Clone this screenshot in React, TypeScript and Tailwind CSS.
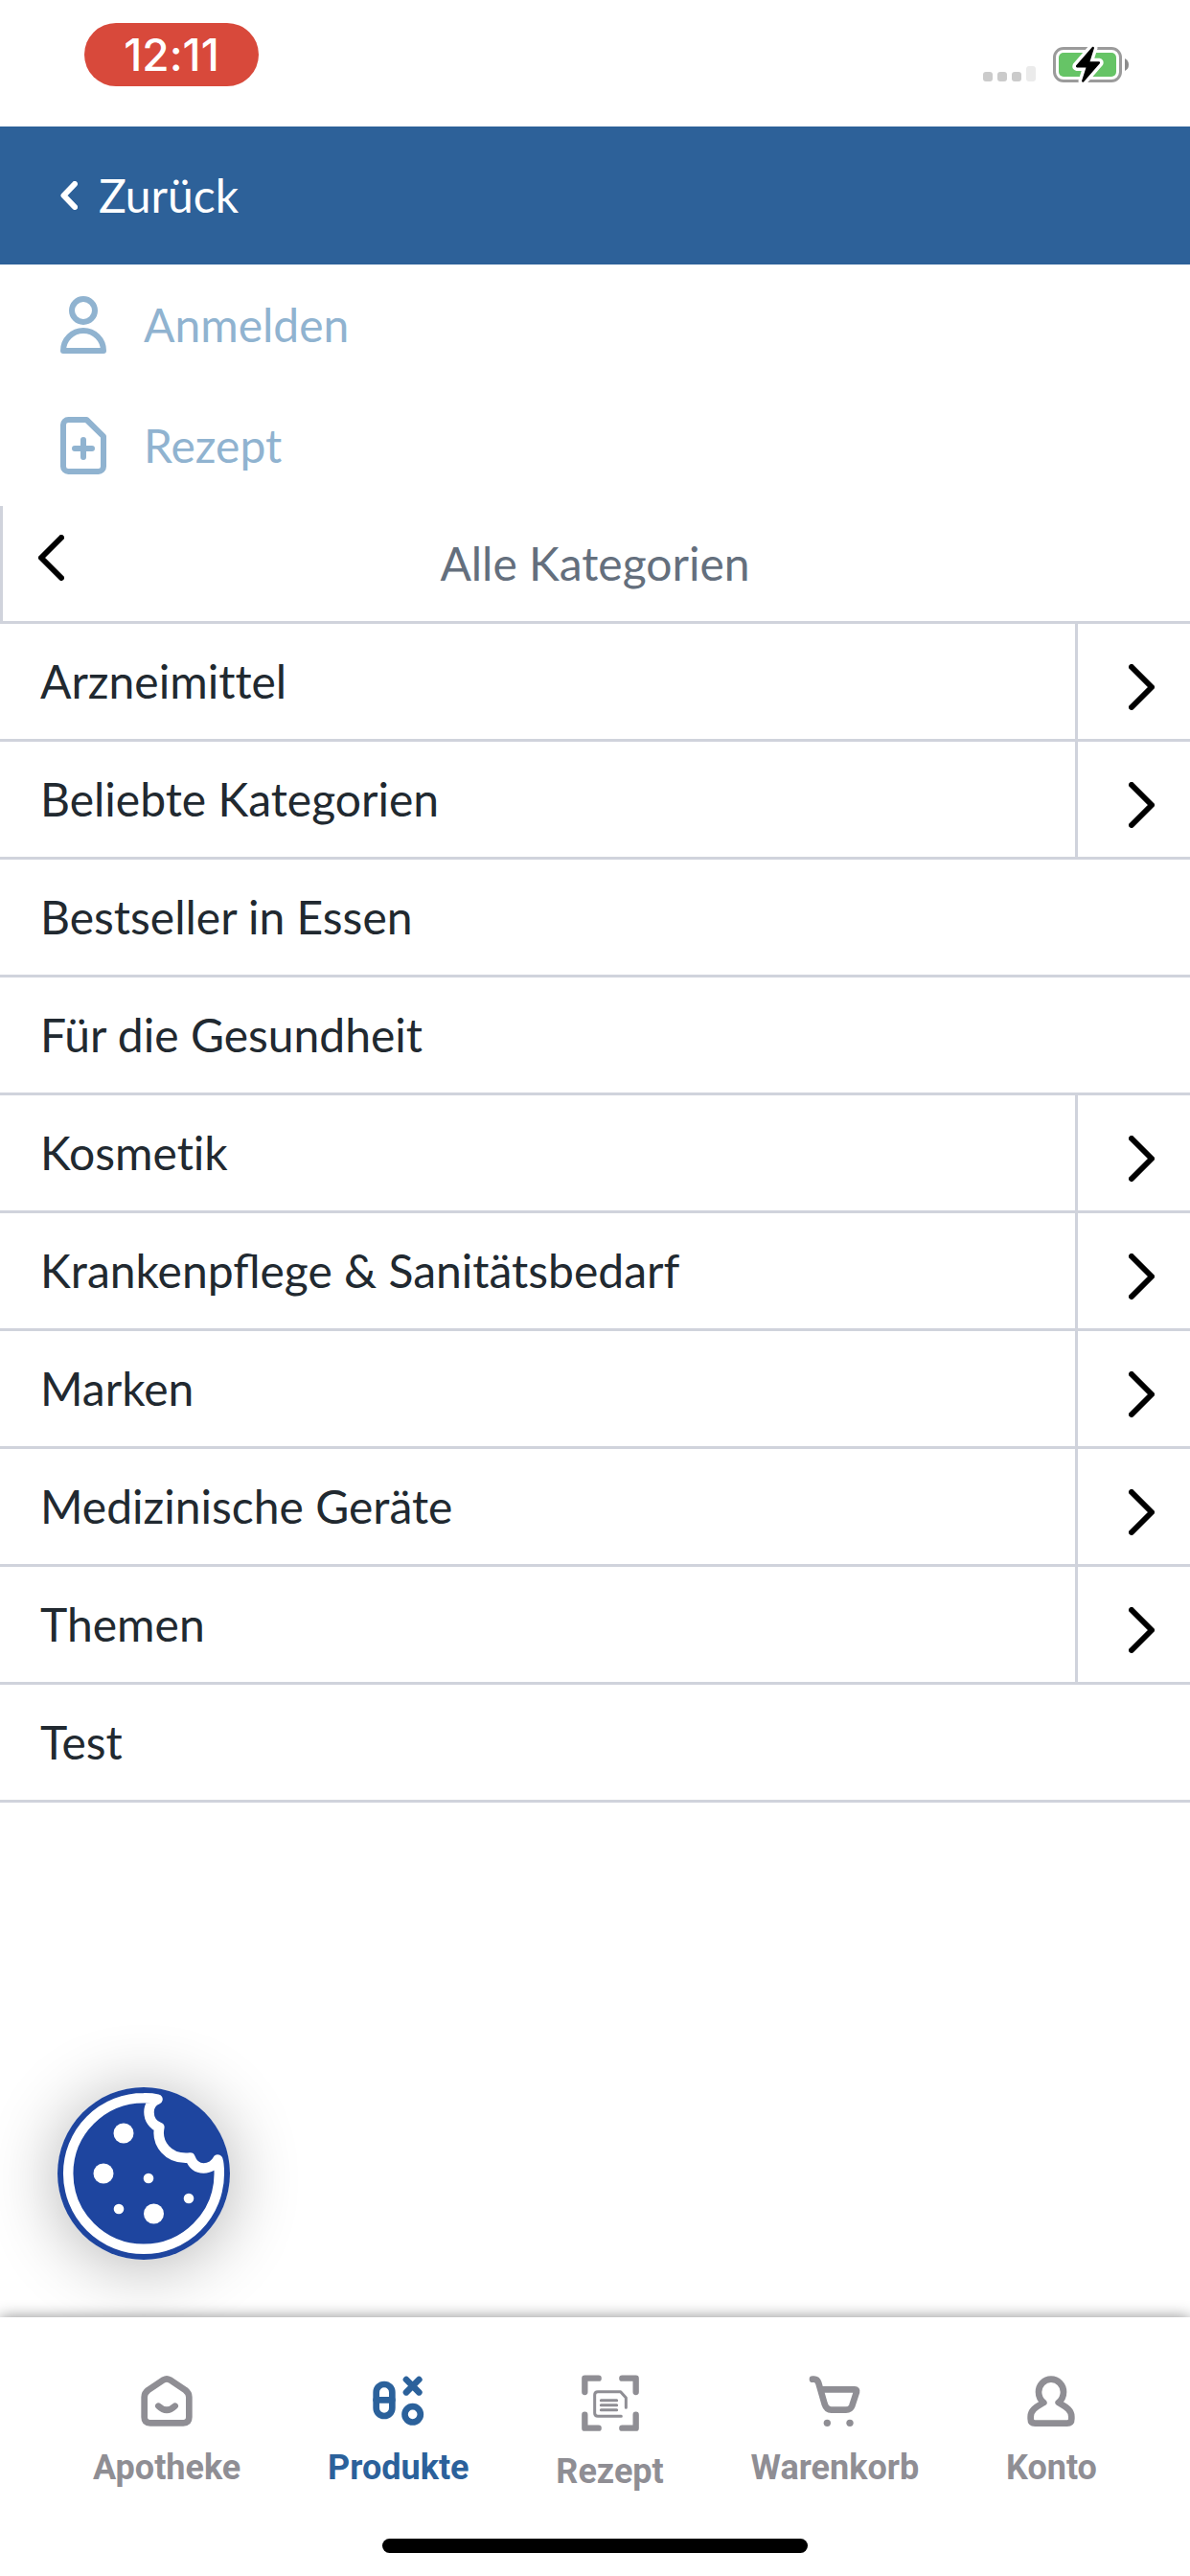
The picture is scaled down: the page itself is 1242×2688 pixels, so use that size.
import type { ReactNode } from "react";

type Category = { name: string; hasChildren: boolean; ligatures?: boolean };

const categories: Category[] = [
  { name: "Arzneimittel", hasChildren: true },
  { name: "Beliebte Kategorien", hasChildren: true },
  { name: "Bestseller in Essen", hasChildren: false },
  { name: "Für die Gesundheit", hasChildren: false },
  { name: "Kosmetik", hasChildren: true },
  { name: "Krankenpflege & Sanitätsbedarf", hasChildren: true, ligatures: true },
  { name: "Marken", hasChildren: true },
  { name: "Medizinische Geräte", hasChildren: true },
  { name: "Themen", hasChildren: true },
  { name: "Test", hasChildren: false },
];

function StatusIcons() {
  return (
    <svg className="h-10 w-[152px]" viewBox="0 0 152 40" aria-hidden="true">
      <g fill="#cbcbcb">
        <rect x="0" y="28" width="10" height="10" rx="3" />
        <rect x="15" y="28" width="10" height="10" rx="3" />
        <rect x="30" y="28" width="10" height="10" rx="3" />
      </g>
      <rect x="45" y="22" width="10" height="16" rx="3" fill="#ebebeb" />
      <rect x="74.5" y="3.5" width="69" height="34" rx="9.5" fill="none" stroke="#9b9b9b" strokeWidth="3" />
      <rect x="79" y="8" width="60" height="25" rx="5" fill="#66c466" />
      <path d="M148 14 Q152 16 152 20.500 Q152 25 148 27Z" fill="#8c8c8c" />
      <path
        d="M114 2 L97 21.500 Q96.500 23 98 23.500 H107.500 L103 37.500 Q103.500 39.500 105 38.500 L122 19 Q122.500 17.500 121 17.300 H111.500 L116 3 Q115.500 1 114 2Z"
        fill="#000"
        stroke="#fff"
        strokeWidth="7"
        strokeLinejoin="round"
        paintOrder="stroke"
      />
    </svg>
  );
}

function UserIcon() {
  return (
    <svg className="h-[60px] w-12" viewBox="189 87 144 180" fill="none" stroke="currentColor" strokeWidth="18" strokeLinejoin="round" aria-hidden="true">
      <circle cx="261" cy="132" r="36" />
      <path d="M198 258 A63 63 0 0 1 324 258Z" />
    </svg>
  );
}

function FilePlusIcon() {
  return (
    <svg className="h-[60px] w-12" viewBox="189 465 144 180" fill="none" stroke="currentColor" strokeWidth="18" strokeLinejoin="round" strokeLinecap="round" aria-hidden="true">
      <path d="M214 474 H271 L324 526 V620 A16 16 0 0 1 308 636 H214 A16 16 0 0 1 198 620 V490 A16 16 0 0 1 214 474Z" />
      <path d="M234 564 H288 M261 537 V591" />
    </svg>
  );
}

function Chevron({ left = false }: { left?: boolean }) {
  return (
    <svg className="h-12 w-[27px]" viewBox="0 0 27 48" fill="none" stroke="#000" strokeWidth="6" strokeLinecap="round" strokeLinejoin="round" aria-hidden="true">
      <path d={left ? "M24 3 L3 24 L24 45" : "M3 3 L24 24 L3 45"} />
    </svg>
  );
}

function CookieIcon() {
  return (
    <svg className="size-[180px]" viewBox="0 0 180 180" aria-hidden="true">
      <circle cx="90" cy="90" r="90" fill="#1e459f" />
      <path
        d="M104.500 12.500 C99 14.500 95.500 19.500 95.500 26 C95.500 33.500 100 39.500 106.300 42 C103 58 115 76 138.500 73.500 C141 80.500 146 84.500 152.500 84.500 C159 84.500 165 80.500 167.300 75.500 C168.500 79 168.800 84 168.800 90 A78.800 78.800 0 1 1 90 11.200 Q98 11 104.500 12.500Z"
        fill="none"
        stroke="#fff"
        strokeWidth="10.500"
        strokeLinejoin="round"
      />
      <g fill="#fff">
        <circle cx="69" cy="48" r="10.500" />
        <circle cx="48" cy="90" r="10.500" />
        <circle cx="100.500" cy="132" r="10.500" />
        <circle cx="95" cy="95" r="5.300" />
        <circle cx="137" cy="116" r="5.300" />
        <circle cx="64" cy="127" r="5.300" />
      </g>
    </svg>
  );
}

function HomeIcon() {
  return (
    <svg className="size-14" viewBox="260 265 168 168" fill="none" stroke="currentColor" strokeWidth="20" strokeLinecap="round" strokeLinejoin="round" aria-hidden="true">
      <path d="M354 281 L402 313 Q414 322 414 335 V398 Q414 416 396 416 H292 Q274 416 274 398 V335 Q274 322 286 313 L334 281 Q344 275 354 281Z" />
      <path d="M318 363 Q344 388 370 363" />
    </svg>
  );
}

function ProductsIcon() {
  return (
    <svg className="size-14" viewBox="984 265 168 168" fill="none" stroke="currentColor" strokeWidth="20" strokeLinecap="round" aria-hidden="true">
      <rect x="998" y="295" width="50" height="99" rx="25" />
      <path d="M998 344 H1048" />
      <path d="M1092 280 L1132 320 M1132 280 L1092 320" />
      <circle cx="1112" cy="389" r="24.500" />
    </svg>
  );
}

function ScanIcon() {
  return (
    <svg className="size-[60px]" viewBox="51 51 180 180" fill="none" stroke="currentColor" strokeLinecap="round" strokeLinejoin="round" aria-hidden="true">
      <path strokeWidth="19" d="M104 62 H61 V105 M178 62 H221 V105 M61 176 V218 H104 M221 176 V218 H178" />
      <path strokeWidth="9" d="M175 181 H102 Q92 181 92 171 V114 Q92 104 102 104 H173 L190 123 V154" />
      <path strokeWidth="9" d="M112 131 H161 M112 146 H161 M112 161 H161" />
    </svg>
  );
}

function CartIcon() {
  return (
    <svg className="size-14" viewBox="38 54 168 168" fill="none" stroke="currentColor" strokeWidth="20" strokeLinecap="round" strokeLinejoin="round" aria-hidden="true">
      <path d="M53 68 H58 Q68 68 72 80 L91 146 Q97 164 112 164 H158 Q172 164 177 151 L191 108 Q193 100 185 100 H80" />
      <circle cx="99" cy="205" r="11" fill="currentColor" stroke="none" />
      <circle cx="170" cy="205" r="11" fill="currentColor" stroke="none" />
    </svg>
  );
}

function AccountIcon() {
  return (
    <svg className="size-14" viewBox="56 54 168 168" fill="none" stroke="currentColor" strokeWidth="20" strokeLinejoin="round" aria-hidden="true">
      <path d="M117 141 C107 133 101 121 101 108 A39 40 0 0 1 179 108 C179 121 173 133 163 141 C178 151 204 160 204 185 V192 Q204 206 190 206 H90 Q76 206 76 192 V185 C76 160 102 151 117 141Z" />
    </svg>
  );
}

function Tab({ icon, label, active = false }: { icon: ReactNode; label: string; active?: boolean }) {
  return (
    <a
      href="#"
      aria-current={active ? "page" : undefined}
      className={`flex flex-col items-center gap-5 ${active ? "text-[#2b619b]" : "text-[#8f8e94]"}`}
    >
      {icon}
      <span className="font-[Roboto,sans-serif] text-[36px] leading-[42px] font-bold">{label}</span>
    </a>
  );
}

export default function App() {
  return (
    <div className="flex min-h-screen flex-col bg-white font-[Lato,sans-serif] text-[48px] leading-[72px] text-[#212930] [font-variant-ligatures:none]">
      <div className="flex h-[132px] items-start justify-between pr-16 pl-[88px]">
        <div className="mt-6 flex h-[66px] w-[182px] items-center justify-center rounded-[33px] bg-[#d8493b] font-[Inter,sans-serif] text-[46px] leading-none font-medium text-white">
          12:11
        </div>
        <div className="mt-[47px]">
          <StatusIcons />
        </div>
      </div>

      <header className="flex h-36 items-center bg-[#2d6199] pl-[63px] text-white">
        <button type="button" className="flex items-center gap-[22px]">
          <svg className="h-[30px] w-[18px]" viewBox="0 0 18 30" fill="none" stroke="currentColor" strokeWidth="6" strokeLinecap="round" strokeLinejoin="round" aria-hidden="true">
            <path d="M15 3 L3.500 15 L15 27" />
          </svg>
          Zurück
        </button>
      </header>

      <nav aria-label="Konto" className="text-[#90b3d0]">
        <a href="#" className="flex h-[126px] items-center gap-[39px] pl-[63px]">
          <UserIcon />
          Anmelden
        </a>
        <a href="#" className="flex h-[126px] items-center gap-[39px] pl-[63px]">
          <FilePlusIcon />
          Rezept
        </a>
      </nav>

      <main className="flex grow flex-col">
        <div className="grid grid-cols-[120px_1fr_120px] border-b-[3px] border-[#d0d3dc]">
          <button type="button" aria-label="Zurück" className="flex items-start border-l-[3px] border-[#d0d3dc] pt-[30px] pl-[37px]">
            <Chevron left />
          </button>
          <h1 className="py-6 text-center text-[#646f7d]">Alle Kategorien</h1>
        </div>
        <ul>
          {categories.map((category) => (
            <li key={category.name} className="flex border-b-[3px] border-[#d0d3dc]">
              <a
                href="#"
                className={`grow py-6 pl-[42px] ${category.ligatures ? "[font-variant-ligatures:normal]" : ""}`}
              >
                {category.name}
              </a>
              {category.hasChildren && (
                <button
                  type="button"
                  aria-label={`${category.name} öffnen`}
                  className="flex w-[120px] justify-end border-l-[3px] border-[#d0d3dc] pt-[42px] pr-[37px]"
                >
                  <Chevron />
                </button>
              )}
            </li>
          ))}
        </ul>
        <button
          type="button"
          aria-label="Cookie-Einstellungen"
          className="mt-auto mb-[60px] ml-[60px] self-start rounded-full shadow-[0_6px_72px_rgba(0,0,0,0.3)]"
        >
          <CookieIcon />
        </button>
      </main>

      <footer className="relative flex h-[270px] flex-col items-center justify-between bg-white pb-6 shadow-[0_0_15px_rgba(0,0,0,0.45)]">
        <nav aria-label="Hauptnavigation" className="flex w-full items-start justify-between px-[97px] pt-[60px]">
          <Tab icon={<HomeIcon />} label="Apotheke" />
          <Tab icon={<ProductsIcon />} label="Produkte" active />
          <Tab icon={<ScanIcon />} label="Rezept" />
          <Tab icon={<CartIcon />} label="Warenkorb" />
          <Tab icon={<AccountIcon />} label="Konto" />
        </nav>
        <div className="h-[15px] w-[444px] rounded-full bg-black" />
      </footer>
    </div>
  );
}
